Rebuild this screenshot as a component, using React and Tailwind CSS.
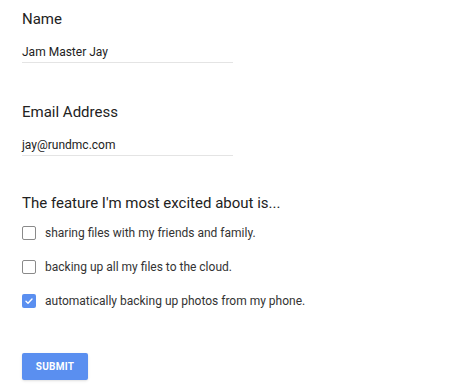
import React, { useState } from 'react';

const options = [
  'sharing files with my friends and family.',
  'backing up all my files to the cloud.',
  'automatically backing up photos from my phone.',
];

const Field = ({ label, value, className }) => (
  <div className={className}>
    <div className="text-[15px] leading-[18px] text-[#222]">{label}</div>
    <div className="mt-[17px] w-[211px] border-b border-[#e4e4e4] pb-[3px] text-[12px] leading-[14px] text-[#222]">
      {value}
    </div>
  </div>
);

const App = () => {
  const [checked, setChecked] = useState([false, false, true]);

  const toggle = (i) => setChecked(checked.map((c, j) => (j === i ? !c : c)));

  return (
    <div className="h-[387px] w-[468px] bg-white px-[22px] pt-[10px] font-['Roboto',sans-serif]">
      <Field label="Name" value="Jam Master Jay" />
      <Field label="Email Address" value="jay@rundmc.com" className="mt-[40px]" />

      <div className="mt-[38px] text-[15px] leading-[18px] text-[#222]">The feature I'm most excited about is...</div>

      <div className="mt-[14px] flex flex-col gap-[20px]">
        {options.map((opt, i) => (
          <label key={opt} className="flex cursor-pointer items-center gap-[9px]" onClick={() => toggle(i)}>
            {checked[i] ? (
              <span className="flex h-[14px] w-[14px] items-center justify-center rounded-[2px] bg-[#5a8ff0]">
                <svg width="10" height="10" viewBox="0 0 10 10" fill="none">
                  <path d="M2 5.2l2 2L8 3" stroke="white" strokeWidth="1.4" strokeLinecap="round" strokeLinejoin="round" />
                </svg>
              </span>
            ) : (
              <span className="h-[14px] w-[14px] rounded-[2px] border-[1.5px] border-[#8a8a8a]" />
            )}
            <span className="text-[12px] leading-[14px] text-[#333]">{opt}</span>
          </label>
        ))}
      </div>

      <button className="mt-[45px] h-[27px] w-[66px] rounded-[2px] bg-[#5a8ff0] text-[10px] font-bold tracking-wide text-white shadow-sm">
        SUBMIT
      </button>
    </div>
  );
};

export default App;
